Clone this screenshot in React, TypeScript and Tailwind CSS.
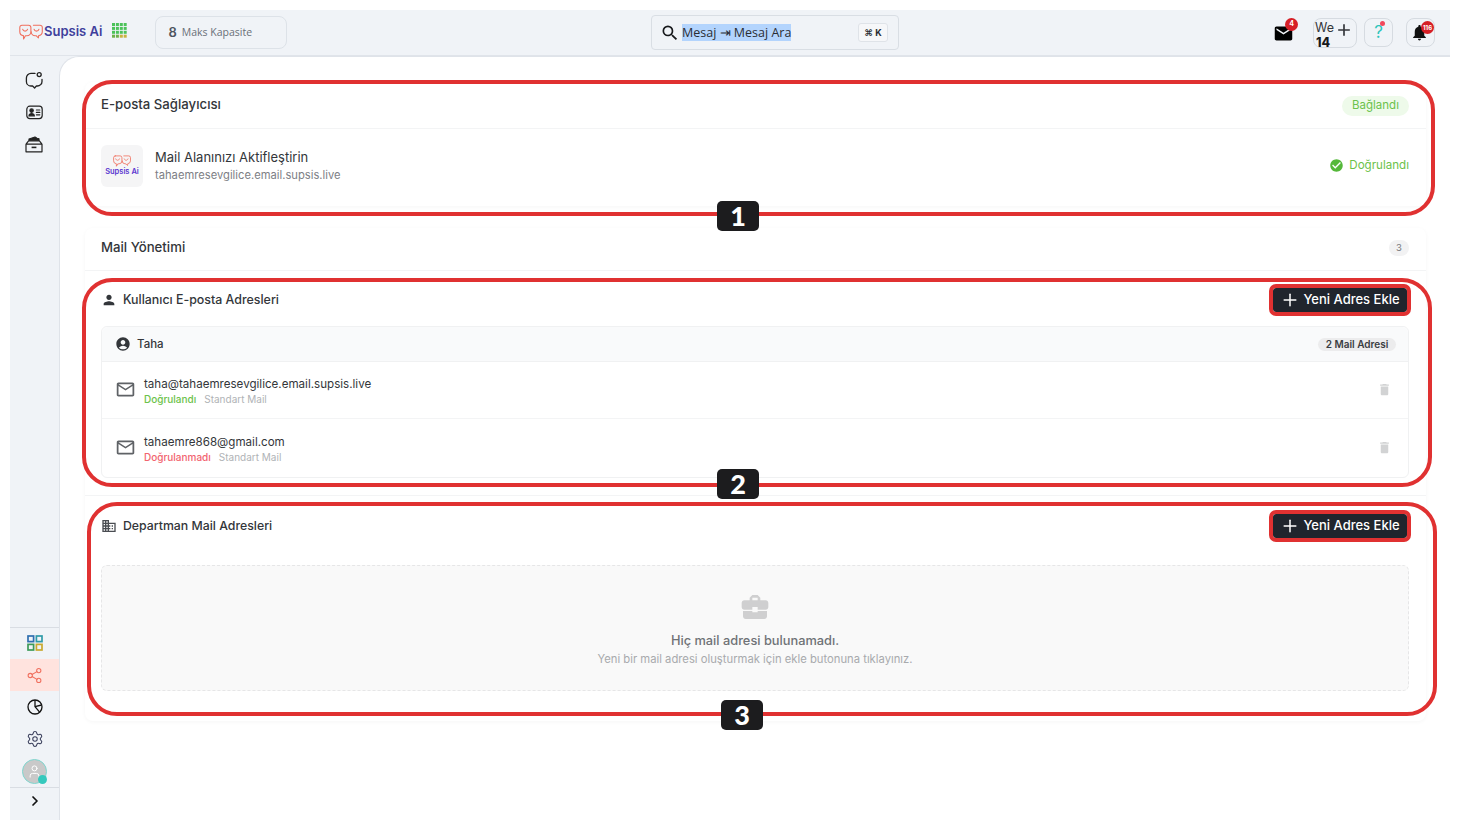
import React from "react";
import { MdPerson, MdAccountCircle, MdMailOutline, MdDelete, MdMail, MdSearch, MdBusiness, MdBusinessCenter, MdCheckCircle, MdNotifications, MdAdd } from "react-icons/md";
import { Settings, Share2, ChevronRight, User, Plus } from "lucide-react";

const Logo = ({ w = 24, h = 16 }: { w?: number; h?: number }) => (
  <svg width={w} height={h} viewBox="0 0 24 16" fill="none" stroke="#f0705f" strokeWidth="1.1" strokeLinecap="round" strokeLinejoin="round">
    <path d="M3 1.2h6.5a2.4 2.4 0 0 1 2.4 2.4v4.2a4 4 0 0 1-4 4H6.4L4.6 15l-.2-3.4A3.8 3.8 0 0 1 .8 7.8V3.6A2.3 2.3 0 0 1 3 1.2z" />
    <path d="M14.4 1.2H21a2.3 2.3 0 0 1 2.3 2.4v4.2a4 4 0 0 1-3.6 3.8L19.4 14l-2-2.2h-1.2a4 4 0 0 1-4-4" />
    <path d="M3.6 5.2c.8 2.6 4.2 2.6 5 0M15 5.2c.8 2.6 4.2 2.6 5 0" />
  </svg>
);

const AppGrid = () => (
  <svg width="15" height="15" viewBox="0 0 15 15">
    {[0, 1, 2, 3].map((r) =>
      [0, 1, 2, 3].map((c) => (
        <rect key={`${r}-${c}`} x={c * 3.9} y={r * 3.9} width="3" height="3" fill={r === 3 && c > 1 ? "#c8b23e" : r === 3 ? "#6fb04a" : "#4cc25a"} />
      ))
    )}
  </svg>
);

const ChatDot = () => (
  <svg width="18" height="18" viewBox="0 0 18 18" fill="none" stroke="#222" strokeWidth="1.3" strokeLinecap="round" strokeLinejoin="round">
    <path d="M10 2.4H6a4.6 4.6 0 0 0-4.6 4.6v3.4A4.6 4.6 0 0 0 6 15h1.6l2 2 1.8-2h1A4.6 4.6 0 0 0 17 10.4V8.4" />
    <circle cx="14.2" cy="3.6" r="2" />
  </svg>
);

const ContactCard = () => (
  <svg width="17" height="15" viewBox="0 0 17 15" fill="none" stroke="#222" strokeWidth="1.2" strokeLinecap="round">
    <rect x="0.8" y="1.2" width="15.4" height="12.4" rx="3" />
    <circle cx="5.6" cy="5.6" r="1.7" fill="#222" />
    <path d="M3 10.8c.3-3 5-3 5.3 0z" fill="#222" />
    <path d="M10.4 5h3.4M10.4 7.4h3.4M10.4 9.8h3.4" />
  </svg>
);

const InboxTray = () => (
  <svg width="18" height="17" viewBox="0 0 18 17" fill="none" stroke="#222" strokeWidth="1.2" strokeLinejoin="round">
    <path d="M1 8.2h16v7.6H1zM1 8.2l2.6-3.4h10.8L17 8.2" />
    <path d="M4 4.8V3l6-2 2 1.2 2 .6v2" fill="#222" />
    <path d="M6.6 11.4h4.8" strokeWidth="1.6" />
  </svg>
);

const ColorGrid = () => (
  <svg width="16" height="16" viewBox="0 0 16 16" fill="none" strokeWidth="1.7">
    <rect x="1" y="1" width="5.6" height="5.6" stroke="#2f6fb0" />
    <rect x="9.4" y="1" width="5.6" height="5.6" stroke="#2f9aa8" />
    <rect x="1" y="9.4" width="5.6" height="5.6" stroke="#3d9a5a" />
    <rect x="9.4" y="9.4" width="5.6" height="5.6" stroke="#c8a92f" />
  </svg>
);

const PieIcon = () => (
  <svg width="16" height="16" viewBox="0 0 16 16" fill="none" stroke="#111" strokeWidth="1.3" strokeLinejoin="round">
    <circle cx="8" cy="8" r="7" />
    <path d="M8 1v6.6l4.6 5.6" />
    <path d="M8 7.6 14.6 6" />
  </svg>
);

const Badge = ({ children, className }: { children: React.ReactNode; className: string }) => (
  <div className={`absolute flex items-center justify-center rounded-[5px] bg-[#1c1c1e] pb-[2px] text-white text-[27px] font-black font-['Lato',sans-serif] leading-none ${className}`}>
    {children}
  </div>
);

const AddButton = () => (
  <button className="flex h-[24px] w-[134px] items-center justify-center gap-[3px] rounded-[3px] bg-[#20252d] text-[13px] font-medium text-white outline-4 outline-[#e03131]">
    <Plus size={20} strokeWidth={1.8} />
    <span>Yeni Adres Ekle</span>
  </button>
);

const MailRow = ({ mail, status, statusClass, border }: { mail: string; status: string; statusClass: string; border?: boolean }) => (
  <div className={`flex items-center pl-[13px] pr-[16px] ${border ? "h-[57px] border-b border-[#f3f4f5]" : "h-[58px]"}`}>
    <MdMailOutline size={21} className="-mt-[2px] text-[#5f6266]" />
    <div className="ml-[8px] flex-1 pt-[1px]">
      <div className="text-[11.6px] leading-[16px] text-[#33363a]">{mail}</div>
      <div className="flex gap-[8px] text-[10px] leading-[14px]">
        <span className={`font-medium ${statusClass}`}>{status}</span>
        <span className="text-[#b0b3b6]">Standart Mail</span>
      </div>
    </div>
    <MdDelete size={15} className="-mt-[2px] text-[#d2d3d4]" />
  </div>
);

export default function App() {
  return (
    <div className="relative h-[830px] w-[1460px] overflow-hidden bg-white p-[10px] font-['Inter',sans-serif]">
      <div className="flex h-[810px] flex-col bg-[#f0f3f7]">
        <header className="flex h-[45px] shrink-0 items-center">
          <div className="flex w-[641px] items-center pl-[9px]">
            <span className="-mt-[2px]"><Logo /></span>
            <span className="ml-[1px] -mt-[2px] text-[13px] font-semibold text-[#3f3f9c]">Supsis Ai</span>
            <span className="ml-[10px] -mt-[4px]"><AppGrid /></span>
            <div className="ml-[28px] flex h-[33px] w-[132px] items-center rounded-[8px] border border-[#dde2e8] pl-[12px]">
              <span className="text-[13px] font-semibold text-[#4e5560]">8</span>
              <span className="ml-[5px] font-['Open_Sans',sans-serif] text-[10.5px] text-[#6a7078]">Maks Kapasite</span>
            </div>
          </div>
          <div className="flex h-[35px] w-[248px] items-center rounded-[4px] border border-[#d9dee4] pl-[8px] pr-[10px]">
            <MdSearch size={20} className="text-[#17191c]" />
            <span className="ml-[2px] bg-[#b3d4fd] font-['Open_Sans',sans-serif] text-[12.5px] leading-[17px] text-[#2a2d33]">Mesaj ⇥ Mesaj Ara</span>
            <span className="ml-auto flex h-[19px] w-[30px] items-center justify-center rounded-[3px] border border-[#dfe3e8] bg-[#f6f7f9] text-[9px] font-bold text-[#2a2d33]">⌘ K</span>
          </div>
          <div className="flex flex-1 items-center justify-end pr-[15px]">
            <div className="relative mr-[21px] h-[20px] w-[18px]">
              <MdMail size={21} className="absolute -left-[1px] top-0 text-black" />
              <span className="absolute -right-[6px] -top-[5px] flex h-[13px] w-[13px] items-center justify-center rounded-full bg-[#d61f26] text-[7px] font-bold text-white">4</span>
            </div>
            <div className="relative mr-[7px] h-[30px] w-[44px] rounded-[8px] border border-[#d6dbe1]">
              <span className="absolute left-[1px] top-[2px] text-[12.5px] leading-[14px] text-[#33363a]">We</span>
              <span className="absolute left-[2px] top-[18px] text-[12.5px] font-extrabold leading-[12px] text-[#17191c]">14</span>
              <MdAdd size={20} className="absolute right-[2px] top-[1px] text-[#33363a]" />
            </div>
            <div className="relative mr-[13px] flex h-[29px] w-[29px] items-center justify-center rounded-[8px] border border-[#d6dbe1] text-[17px] text-[#2cc5bb]">
              ?
              <span className="absolute right-[7px] top-[2px] h-[5px] w-[5px] rounded-full bg-[#f2495c]" />
            </div>
            <div className="relative flex h-[29px] w-[29px] items-center justify-center rounded-[8px] border border-[#d6dbe1]">
              <MdNotifications size={19} className="-ml-[2px] text-[#111]" />
              <span className="absolute right-0 top-[2px] flex h-[13px] w-[13px] items-center justify-center rounded-full bg-[#d61f26] text-[6px] font-bold text-white">116</span>
            </div>
          </div>
        </header>
        <div className="flex min-h-0 flex-1 border-t border-[#e0e4ea]">
          <aside className="flex w-[49px] shrink-0 flex-col items-stretch">
            <div className="flex flex-col items-center gap-[14px] pr-[1px] pt-[15px]">
              <span className="flex h-[18px] items-center"><ChatDot /></span>
              <span className="flex h-[18px] items-center"><ContactCard /></span>
              <span className="flex h-[18px] items-center"><InboxTray /></span>
            </div>
            <div className="mt-auto border-t border-[#d9dde3]">
              <div className="flex h-[31px] items-center justify-center pb-[1px]"><ColorGrid /></div>
              <div className="flex h-[32px] items-center justify-center bg-[#ffe3de] text-[#f0705f]"><Share2 size={17} strokeWidth={1.5} /></div>
              <div className="flex h-[32px] items-center justify-center"><PieIcon /></div>
              <div className="flex h-[32px] items-center justify-center text-[#3a3f5c]"><Settings size={18} strokeWidth={1.4} /></div>
              <div className="flex h-[32px] items-center justify-center">
                <div className="relative flex h-[25px] w-[25px] items-center justify-center rounded-full border border-[#7fd6cf] bg-[#c9c9c9] text-white">
                  <User size={15} strokeWidth={1.6} />
                  <span className="absolute -bottom-[1px] -right-[1px] h-[9px] w-[9px] rounded-full bg-[#35c9bd]" />
                </div>
              </div>
            </div>
            <div className="flex h-[33px] items-center justify-center border-t border-[#d9dde3] pb-[6px] text-[#111]">
              <ChevronRight size={16} strokeWidth={2.6} />
            </div>
          </aside>
          <main className="min-w-0 flex-1 rounded-tl-[20px] border-l border-t border-[#dfe3e9] bg-white pl-[25px] pr-[24px] pt-[25px]">
            <section className="h-[124px] rounded-[8px] shadow-[0_1px_4px_rgba(0,0,0,0.04)]">
              <div className="flex h-[47px] items-center justify-between border-b border-[#f3f4f5] pl-[16px] pr-[17px]">
                <h2 className="text-[13.2px] font-medium text-[#33363a]">E-posta Sağlayıcısı</h2>
                <span className="mt-[1px] flex h-[20px] w-[67px] items-center justify-center rounded-full bg-[#eefaea] text-[11.5px] text-[#6cc24a]">Bağlandı</span>
              </div>
              <div className="flex h-[73px] items-center pl-[16px] pr-[17px]">
                <div className="flex h-[42px] w-[42px] flex-col items-center justify-center rounded-[6px] bg-[#f5f5f6] pt-[1px]">
                  <Logo w={18} h={12} />
                  <span className="text-[7.5px] font-semibold leading-[10px] text-[#5a35d0]">Supsis Ai</span>
                </div>
                <div className="ml-[12px] flex-1">
                  <div className="text-[13px] leading-[19px] text-[#33363a]">Mail Alanınızı Aktifleştirin</div>
                  <div className="text-[11.2px] leading-[17px] text-[#7d8085]">tahaemresevgilice.email.supsis.live</div>
                </div>
                <span className="flex items-center gap-[5px] text-[11.6px] text-[#6cc24a]">
                  <MdCheckCircle size={15} className="text-[#55b83a]" />
                  Doğrulandı
                </span>
              </div>
            </section>
            <section className="mt-[22px] rounded-[8px] shadow-[0_1px_4px_rgba(0,0,0,0.04)]">
              <div className="flex h-[43px] items-center justify-between border-b border-[#f3f4f5] pb-[2px] pl-[16px] pr-[17px]">
                <h2 className="text-[13.2px] font-medium text-[#33363a]">Mail Yönetimi</h2>
                <span className="flex h-[16px] w-[20px] items-center justify-center rounded-full bg-[#f2f2f3] text-[9.5px] text-[#77797d]">3</span>
              </div>
              <div className="h-[225px] border-b border-[#f3f4f5] pl-[16px] pr-[17px] pt-[17px]">
                <div className="flex h-[24px] items-center justify-between pr-[2px]">
                  <div className="flex items-center">
                    <MdPerson size={16} className="text-[#33363a]" />
                    <span className="ml-[6px] text-[12.4px] font-medium text-[#33363a]">Kullanıcı E-posta Adresleri</span>
                  </div>
                  <AddButton />
                </div>
                <div className="mt-[14px] rounded-[6px] border border-[#f0f1f2]">
                  <div className="flex h-[35px] items-center rounded-t-[6px] border-b border-[#f0f1f2] bg-[#f9fafb] pl-[13px] pr-[12px]">
                    <MdAccountCircle size={16} className="text-[#33363a]" />
                    <span className="ml-[6px] mt-[1px] text-[11.5px] font-medium text-[#33363a]">Taha</span>
                    <span className="ml-auto flex h-[13px] w-[78px] items-center justify-center rounded-full bg-[#ececed] text-[10px] font-semibold text-[#3a3d42]">2 Mail Adresi</span>
                  </div>
                  <MailRow mail="taha@tahaemresevgilice.email.supsis.live" status="Doğrulandı" statusClass="text-[#6cc24a]" border />
                  <MailRow mail="tahaemre868@gmail.com" status="Doğrulanmadı" statusClass="text-[#f2646f]" />
                </div>
              </div>
              <div className="h-[225px] pl-[16px] pr-[17px] pt-[18px]">
                <div className="flex h-[24px] items-center justify-between pr-[2px]">
                  <div className="flex items-center">
                    <MdBusiness size={16} className="text-[#4a4d52]" />
                    <span className="ml-[6px] mt-[1px] text-[12.3px] font-medium text-[#33363a]">Departman Mail Adresleri</span>
                  </div>
                  <AddButton />
                </div>
                <div className="mt-[27px] flex h-[126px] flex-col items-center rounded-[6px] border border-dashed border-[#e6e6e7] bg-[#f9f9f9] pt-[25px]">
                  <MdBusinessCenter size={32} className="text-[#cfcfd0]" />
                  <div className="mt-[9px] text-[12.8px] font-medium leading-[18px] text-[#6f7276]">Hiç mail adresi bulunamadı.</div>
                  <div className="mt-[1px] text-[11.25px] leading-[16px] text-[#a8aaad]">Yeni bir mail adresi oluşturmak için ekle butonuna tıklayınız.</div>
                </div>
              </div>
            </section>
          </main>
        </div>
      </div>

      {/* annotation overlays */}
      <div className="pointer-events-none absolute left-[82px] top-[80px] h-[136px] w-[1353px] rounded-[30px] border-4 border-[#e03131]" />
      <div className="pointer-events-none absolute left-[82px] top-[278px] h-[209px] w-[1350px] rounded-[30px] border-4 border-[#e03131]" />
      <div className="pointer-events-none absolute left-[87px] top-[502px] h-[214px] w-[1350px] rounded-[30px] border-4 border-[#e03131]" />
      <Badge className="left-[717px] top-[201px] h-[30px] w-[42px]">1</Badge>
      <Badge className="left-[717px] top-[469px] h-[30px] w-[42px]">2</Badge>
      <Badge className="left-[721px] top-[700px] h-[30px] w-[42px]">3</Badge>
    </div>
  );
}
